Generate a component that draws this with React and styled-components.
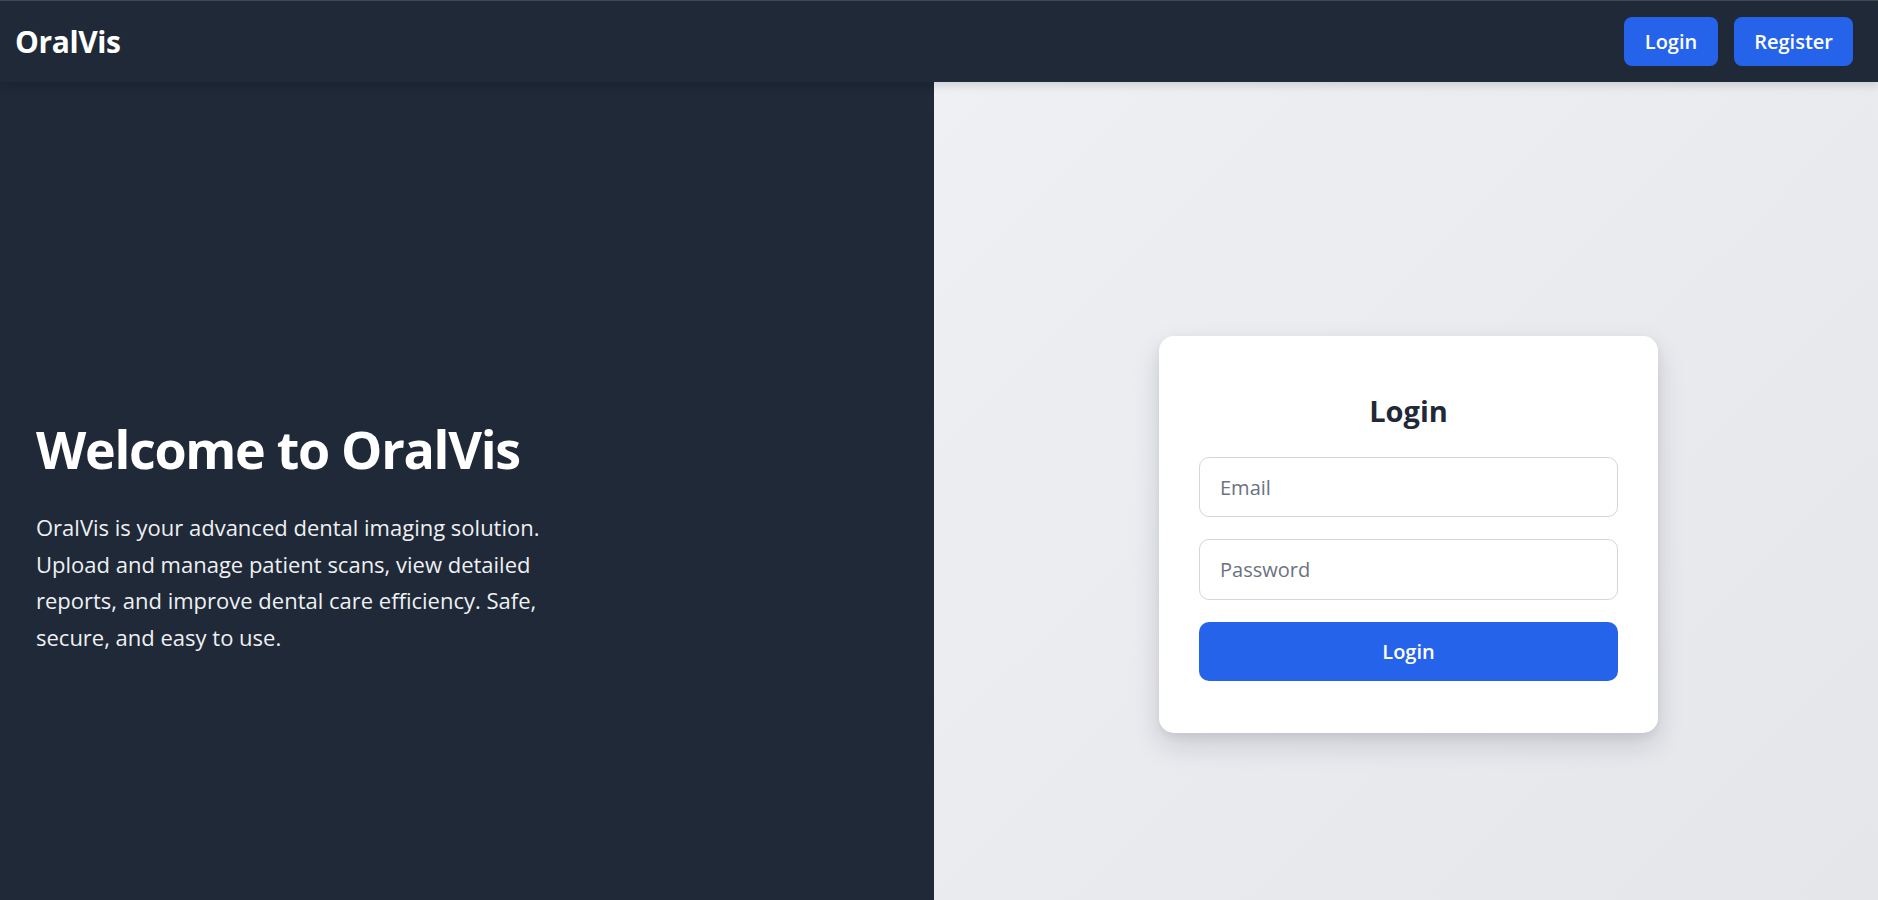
import React from "react";
import styled, { createGlobalStyle } from "styled-components";

const GlobalStyle = createGlobalStyle`
  * { box-sizing: border-box; }
  html, body { margin: 0; padding: 0; }
  body {
    font-family: "Open Sans", "Noto Sans", Arial, sans-serif;
    background: #1f2937;
  }
  input, button { font-family: inherit; }
`;

const Page = styled.div`
  display: flex;
  flex-direction: column;
`;

const NavBar = styled.header`
  position: relative;
  z-index: 2;
  height: 82px;
  display: flex;
  align-items: center;
  justify-content: space-between;
  padding: 0 25px 0 15px;
  background: #1f2937;
  border-top: 1px solid #44474d;
  box-shadow: 0 4px 8px rgba(0, 0, 0, 0.12);
`;

const Logo = styled.div`
  color: #ffffff;
  font-size: 30px;
  font-weight: 700;
  letter-spacing: -0.4px;
`;

const NavActions = styled.nav`
  display: flex;
  gap: 16px;
`;

const NavButton = styled.button`
  height: 49px;
  padding: 0 ${(p) => (p.$wide ? "20px" : "21px")};
  border: none;
  border-radius: 8px;
  background: #2563eb;
  color: #ffffff;
  font-size: 20px;
  font-weight: 600;
  cursor: pointer;
`;

const Main = styled.main`
  display: grid;
  grid-template-columns: 934px 1fr;
  min-height: 900px;
`;

const Hero = styled.section`
  display: flex;
  flex-direction: column;
  justify-content: center;
  padding: 8px 0 0 36px;
  background: #1f2937;
  color: #ffffff;
`;

const HeroTitle = styled.h1`
  margin: 0 0 28px;
  font-size: 52px;
  line-height: 64px;
  font-weight: 700;
  letter-spacing: -1.3px;
  color: #ffffff;
`;

const HeroText = styled.p`
  margin: 0;
  max-width: 555px;
  font-size: 22px;
  line-height: 36.5px;
  color: #eef0f3;
`;

const AuthPane = styled.section`
  display: flex;
  align-items: center;
  justify-content: center;
  padding: 5px 0 0 5px;
  background: linear-gradient(135deg, #eef0f3 0%, #e9eaee 55%, #e4e6ea 100%);
`;

const Card = styled.div`
  width: 499px;
  padding: 40px 40px 52px;
  background: #ffffff;
  border-radius: 15px;
  box-shadow: 0 12px 28px rgba(15, 23, 42, 0.14), 0 4px 10px rgba(15, 23, 42, 0.06);
  display: flex;
  flex-direction: column;
`;

const CardTitle = styled.h2`
  margin: 15px 0 26px;
  font-size: 29px;
  line-height: 40px;
  font-weight: 700;
  text-align: center;
  color: #1f2937;
`;

const Field = styled.input`
  height: ${(p) => p.$h || 60}px;
  width: 100%;
  margin-bottom: 22px;
  padding: 0 20px;
  border: 1px solid #d4d6dc;
  border-radius: 10px;
  font-size: 20px;
  color: #1f2937;
  background: #ffffff;
  outline: none;
  &::placeholder { color: #6b7280; }
`;

const SubmitButton = styled.button`
  height: 59px;
  width: 100%;
  border: none;
  border-radius: 10px;
  background: #2563eb;
  color: #ffffff;
  font-size: 20px;
  font-weight: 600;
  cursor: pointer;
`;

export default function App() {
  return (
    <Page>
      <GlobalStyle />
      <NavBar>
        <Logo>OralVis</Logo>
        <NavActions>
          <NavButton>Login</NavButton>
          <NavButton $wide>Register</NavButton>
        </NavActions>
      </NavBar>
      <Main>
        <Hero>
          <HeroTitle>Welcome to OralVis</HeroTitle>
          <HeroText>
            OralVis is your advanced dental imaging solution. Upload and manage
            patient scans, view detailed reports, and improve dental care
            efficiency. Safe, secure, and easy to use.
          </HeroText>
        </Hero>
        <AuthPane>
          <Card>
            <CardTitle>Login</CardTitle>
            <Field type="email" placeholder="Email" />
            <Field type="password" placeholder="Password" $h={61} />
            <SubmitButton>Login</SubmitButton>
          </Card>
        </AuthPane>
      </Main>
    </Page>
  );
}
